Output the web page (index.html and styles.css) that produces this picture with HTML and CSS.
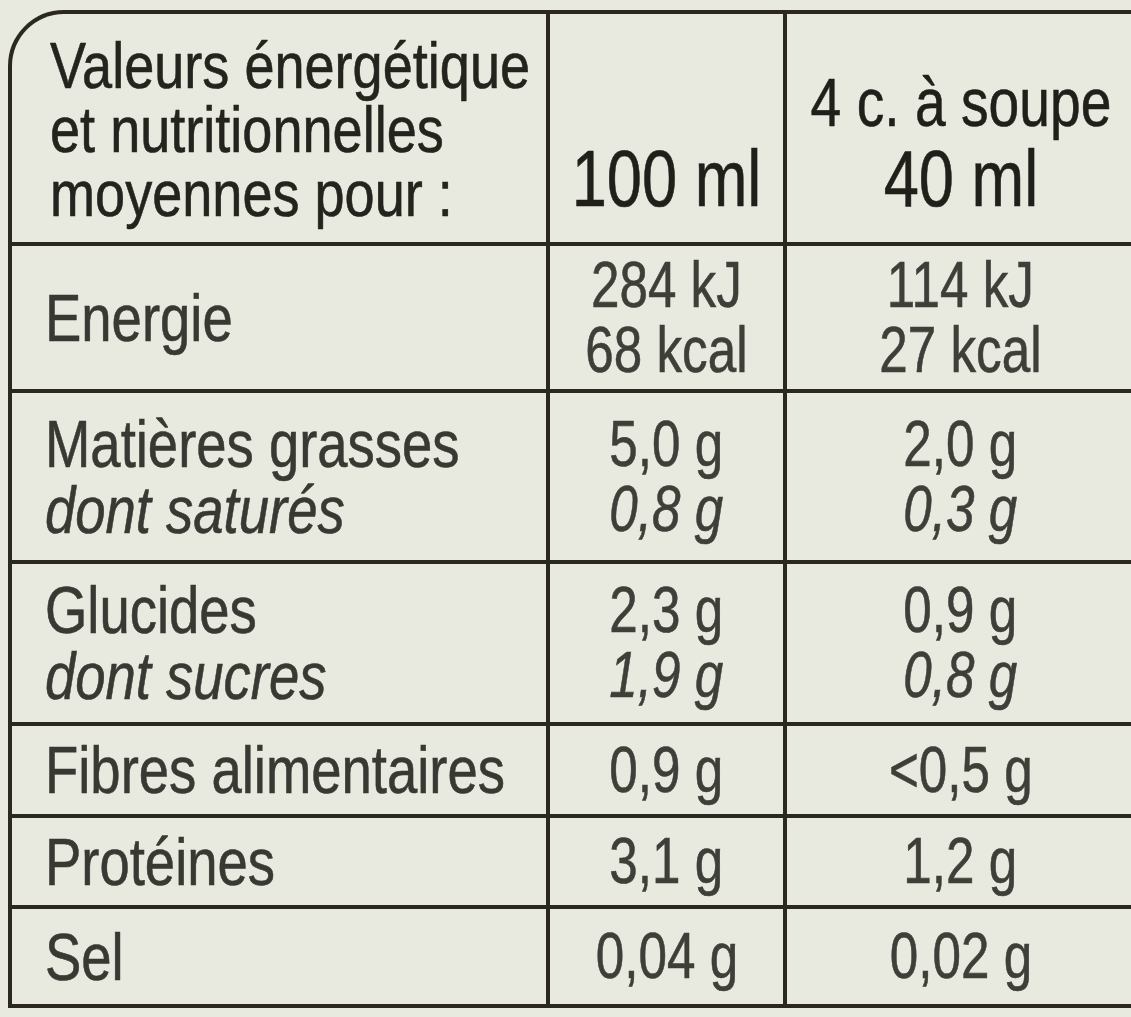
FILE: index.html
```html
<!DOCTYPE html>
<html lang="fr">
<head>
<meta charset="utf-8">
<title>Valeurs nutritionnelles</title>
<link rel="stylesheet" href="styles.css">
</head>
<body>
<div class="label">
  <div class="grid">
    <div class="cell head-left"><span class="t left">Valeurs énergétique<br>et nutritionnelles<br>moyennes pour :</span></div>
    <div class="cell head-val"><span class="t mid big">100 ml</span></div>
    <div class="cell head-val"><span class="t mid"><span class="sub">4 c. à soupe</span><br><span class="big">40 ml</span></span></div>

    <div class="cell name"><span class="t left">Energie</span></div>
    <div class="cell val"><span class="t mid">284 kJ<br>68 kcal</span></div>
    <div class="cell val"><span class="t mid">114 kJ<br>27 kcal</span></div>

    <div class="cell name"><span class="t left">Matières grasses<br><i>dont saturés</i></span></div>
    <div class="cell val"><span class="t mid">5,0 g<br><i>0,8 g</i></span></div>
    <div class="cell val"><span class="t mid">2,0 g<br><i>0,3 g</i></span></div>

    <div class="cell name"><span class="t left">Glucides<br><i>dont sucres</i></span></div>
    <div class="cell val"><span class="t mid">2,3 g<br><i>1,9 g</i></span></div>
    <div class="cell val"><span class="t mid">0,9 g<br><i>0,8 g</i></span></div>

    <div class="cell name"><span class="t left">Fibres alimentaires</span></div>
    <div class="cell val"><span class="t mid">0,9 g</span></div>
    <div class="cell val"><span class="t mid">&lt;0,5 g</span></div>

    <div class="cell name"><span class="t left">Protéines</span></div>
    <div class="cell val"><span class="t mid">3,1 g</span></div>
    <div class="cell val"><span class="t mid">1,2 g</span></div>

    <div class="cell name"><span class="t left">Sel</span></div>
    <div class="cell val"><span class="t mid">0,04 g</span></div>
    <div class="cell val"><span class="t mid">0,02 g</span></div>
  </div>
</div>
</body>
</html>
```
FILE: styles.css
```css
html, body {
  margin: 0;
  padding: 0;
  overflow: hidden;
  background: #e8eae0;
}
body {
  width: 1131px;
  height: 1017px;
  font-family: "Liberation Sans", Arial, sans-serif;
  color: #393934;
}
.label {
  margin: 10px 0 0 8px;
  width: 1122px;
  border: 4px solid #2b2822;
  border-top-left-radius: 56px;
  overflow: hidden;
  background: #2b2822;
}
.grid {
  display: grid;
  grid-template-columns: 534px 233px minmax(0, 1fr);
  grid-template-rows: 228px 143px 167px 158px 88px 87px 95px;
  gap: 4px;
}
.cell {
  background: #e8eae0;
  display: flex;
  align-items: center;
  white-space: nowrap;
  min-width: 0;
}
.name {
  padding-left: 33px;
  font-size: 66px;
  line-height: 66px;
}
.name .t {
  transform: scaleX(0.825);
}
.val {
  justify-content: center;
  font-size: 64px;
  line-height: 65px;
  color: #3f3f3a;
}
.head-left {
  align-items: flex-start;
  padding: 20px 0 0 38px;
  font-size: 64px;
  line-height: 64px;
  color: #24231e;
}
.head-left .t {
  transform: scaleX(0.845);
}
.head-val {
  align-items: flex-end;
  justify-content: center;
  padding-bottom: 22px;
  color: #201f1a;
}
.t {
  display: inline-block;
  flex: none;
  transform: scaleX(0.8);
  -webkit-text-stroke: 0.6px currentColor;
}
.t.left {
  transform-origin: left center;
}
.t.mid {
  text-align: center;
  transform-origin: center center;
}
.big {
  font-size: 79px;
  line-height: 82px;
}
.sub {
  font-size: 69px;
  line-height: 70px;
}
i {
  font-style: italic;
}
```
